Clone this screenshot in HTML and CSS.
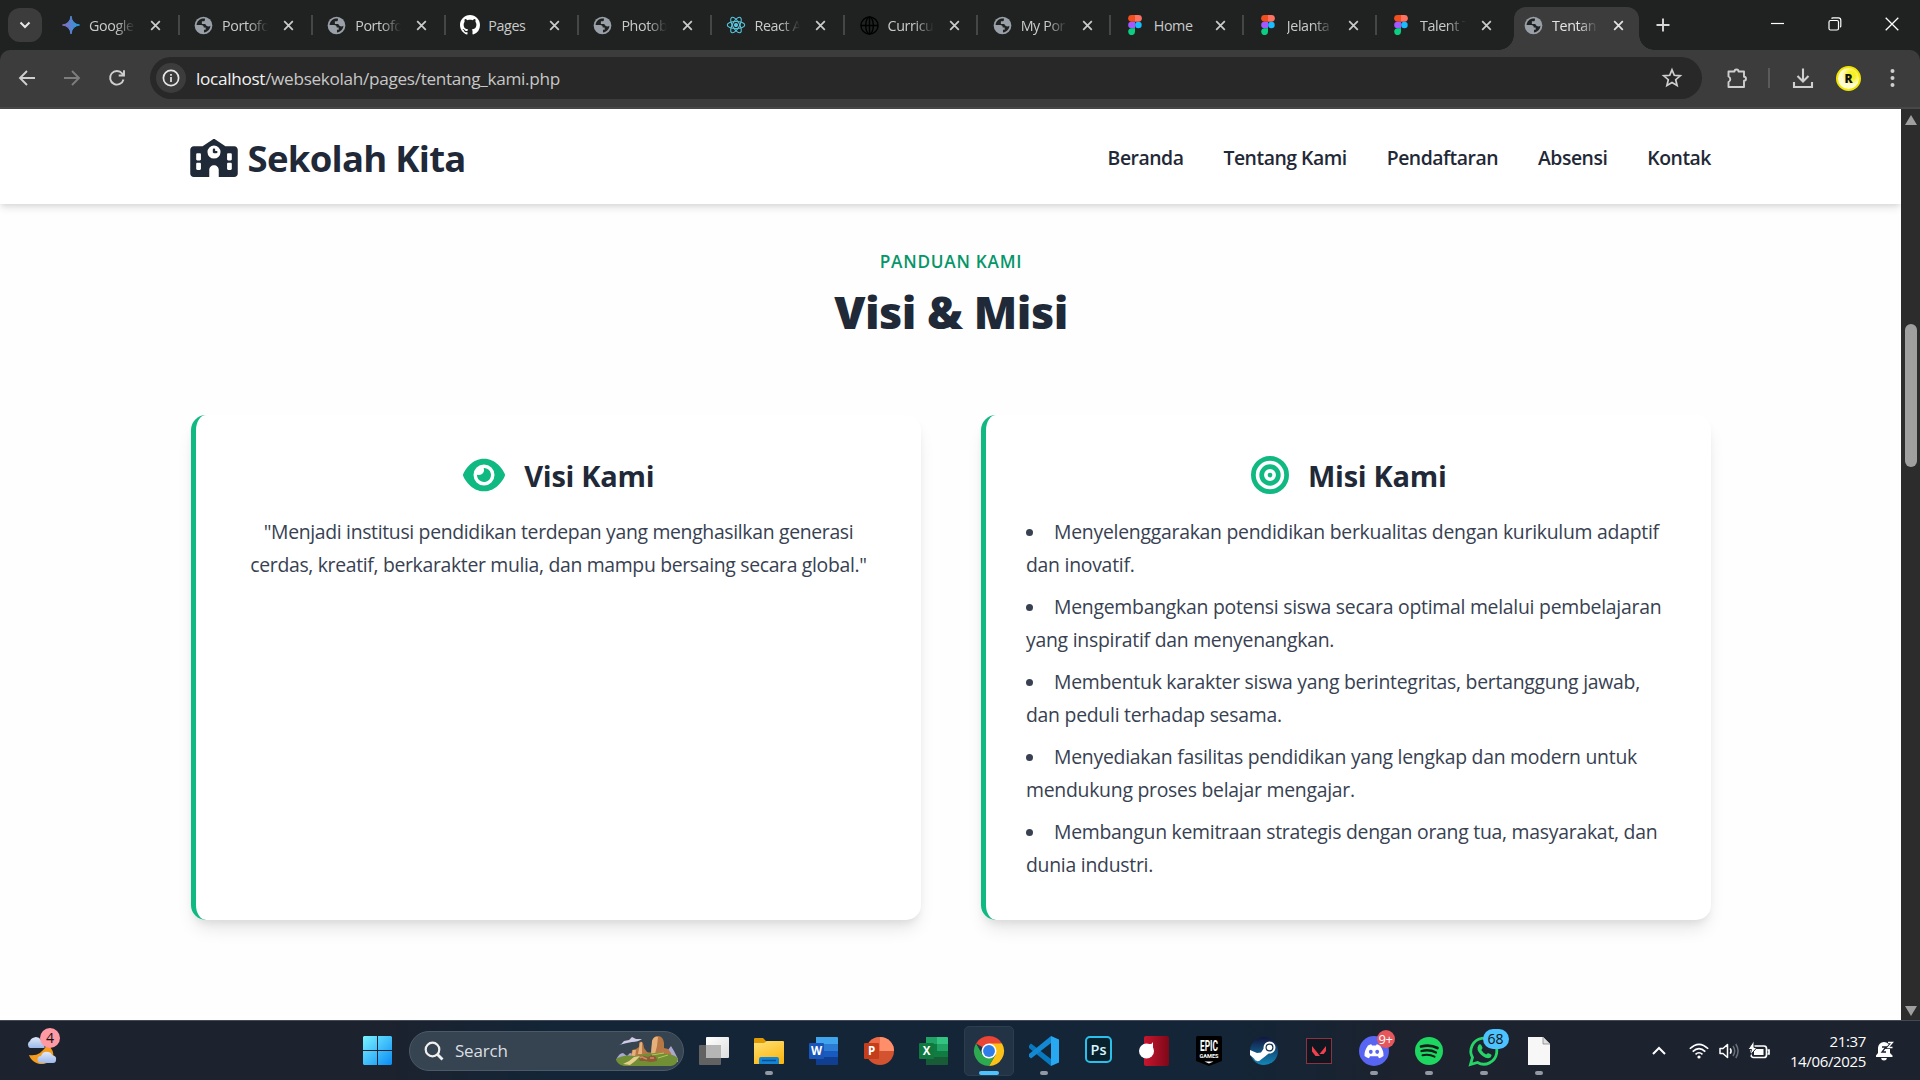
FILE: index.html
```html
<!DOCTYPE html>
<html lang="id">
<head>
<meta charset="utf-8">
<title>Tentang Kami - Sekolah Kita</title>
<link rel="stylesheet" href="styles.css">
</head>
<body>
<svg class="defs" aria-hidden="true">
  <symbol id="x" viewBox="0 0 12 12"><path d="M1.3 1.3l9.4 9.4M10.7 1.3l-9.4 9.4" stroke="currentColor" stroke-width="1.9" fill="none"/></symbol>
  <symbol id="globe" viewBox="0 0 20 20"><circle cx="10" cy="10" r="9.3" fill="#9aa0a8"/><path d="M9.2 2.6C5.600 3 3 6 2.700 9.500H7.500C9.500 9.500 10.300 10.500 10.300 12H12.300V14.500H10.500V17.300C14.200 17 17.200 14 17.300 10.300C16 11.300 14.500 11 13.500 10.500C12.500 10 12.500 8.300 11.300 8.300H8.300V5.600H10C11 5.600 11.500 5 11.500 4V2.700Z" fill="#1f2221"/></symbol>
  <symbol id="figma" viewBox="0 0 14 20"><path d="M3.500 0H7v6.700H3.500a3.350 3.350 0 0 1 0-6.700" fill="#f24e1e"/><path d="M7 0h3.500a3.350 3.350 0 0 1 0 6.700H7" fill="#ff7262"/><path d="M3.500 6.700H7v6.600H3.500a3.300 3.300 0 0 1 0-6.600" fill="#a259ff"/><circle cx="10.400" cy="10" r="3.300" fill="#1abcfe"/><path d="M3.500 13.300H7v3.300a3.400 3.400 0 1 1-3.500-3.300" fill="#0acf83"/></symbol>
</svg>

<div class="tabstrip">
  <div class="tab-search"><svg width="12" height="8" viewBox="0 0 12 8"><path d="M1.500 1.500L6 6l4.500-4.500" stroke="#e8e8e8" stroke-width="2" fill="none"/></svg></div>
  <div class="tabs">
    <div class="tab"><span class="fav"><svg width="18" height="20" viewBox="0 0 18 20"><defs><linearGradient id="gem"><stop offset="0" stop-color="#9168c0"/><stop offset=".5" stop-color="#5684d1"/><stop offset="1" stop-color="#1ba1e3"/></linearGradient></defs><path d="M9 1Q10 9 17.500 10Q10 11 9 19Q8 11 .5 10Q8 9 9 1" stroke="url(#gem)" stroke-width="1" fill="url(#gem)"/></svg></span><span class="label">Google</span><svg class="close"><use href="#x"/></svg></div>
    <div class="tab"><span class="fav"><svg width="19" height="19"><use href="#globe"/></svg></span><span class="label">Portofo</span><svg class="close"><use href="#x"/></svg></div>
    <div class="tab"><span class="fav"><svg width="19" height="19"><use href="#globe"/></svg></span><span class="label">Portofo</span><svg class="close"><use href="#x"/></svg></div>
    <div class="tab"><span class="fav"><svg width="20" height="20" viewBox="0 0 16 16"><path fill="#fff" d="M8 0C3.580 0 0 3.580 0 8c0 3.540 2.290 6.530 5.470 7.590.4.070.55-.17.55-.38 0-.19-.01-.82-.01-1.490-2.010.37-2.530-.49-2.690-.94-.09-.23-.48-.94-.82-1.130-.28-.15-.68-.52-.01-.53.63-.01 1.080.58 1.230.82.72 1.210 1.870.87 2.330.66.07-.52.28-.87.51-1.070-1.780-.2-3.640-.89-3.640-3.950 0-.87.31-1.590.82-2.150-.08-.2-.36-1.020.08-2.120 0 0 .67-.21 2.200.82.64-.18 1.320-.27 2-.27s1.360.09 2 .27c1.530-1.040 2.200-.82 2.200-.82.44 1.100.16 1.920.08 2.120.51.56.82 1.270.82 2.150 0 3.070-1.870 3.750-3.650 3.950.29.25.54.73.54 1.480 0 1.070-.01 1.930-.01 2.200 0 .21.15.46.55.38A8 8 0 0 0 16 8c0-4.420-3.580-8-8-8"/></svg></span><span class="label whole">Pages</span><svg class="close"><use href="#x"/></svg></div>
    <div class="tab"><span class="fav"><svg width="19" height="19"><use href="#globe"/></svg></span><span class="label">Photob</span><svg class="close"><use href="#x"/></svg></div>
    <div class="tab"><span class="fav"><svg width="20" height="20" viewBox="-12 -12 24 24" fill="none" stroke="#58c4dc" stroke-width="1.300"><circle r="1.800" fill="#58c4dc"/><ellipse rx="10.500" ry="4.200"/><ellipse rx="10.500" ry="4.200" transform="rotate(60)"/><ellipse rx="10.500" ry="4.200" transform="rotate(120)"/></svg></span><span class="label">React A</span><svg class="close"><use href="#x"/></svg></div>
    <div class="tab"><span class="fav"><svg width="19" height="19" viewBox="-10 -10 20 20" fill="none" stroke="#000" stroke-width="1.500"><circle r="9"/><ellipse rx="4" ry="9"/><path d="M-9 0H9M0-9V9"/></svg></span><span class="label">Curricu</span><svg class="close"><use href="#x"/></svg></div>
    <div class="tab"><span class="fav"><svg width="19" height="19"><use href="#globe"/></svg></span><span class="label">My Por</span><svg class="close"><use href="#x"/></svg></div>
    <div class="tab"><span class="fav"><svg width="14" height="20"><use href="#figma"/></svg></span><span class="label whole">Home</span><svg class="close"><use href="#x"/></svg></div>
    <div class="tab"><span class="fav"><svg width="14" height="20"><use href="#figma"/></svg></span><span class="label">Jelanta</span><svg class="close"><use href="#x"/></svg></div>
    <div class="tab last"><span class="fav"><svg width="14" height="20"><use href="#figma"/></svg></span><span class="label">Talent T</span><svg class="close"><use href="#x"/></svg></div>
    <div class="tab active"><span class="fav"><svg width="19" height="19"><use href="#globe"/></svg></span><span class="label">Tentan</span><svg class="close"><use href="#x"/></svg></div>
  </div>
  <svg class="newtab" width="14" height="14" viewBox="0 0 14 14"><path d="M7 .5v13M.5 7h13" stroke="#d8d8d8" stroke-width="1.900"/></svg>
  <div class="winbtns">
    <svg width="14" height="14"><path d="M0 6.500h13" stroke="#fff" stroke-width="1.200"/></svg>
    <svg width="14" height="14" fill="none" stroke="#fff" stroke-width="1.200"><rect x="1" y="3.500" width="9.500" height="9.500" rx="1.500"/><path d="M3.500 1.500q.5-.6 1.500-.6h5.500q2.300 0 2.300 2.300v5.500q0 1-.6 1.500"/></svg>
    <svg width="14" height="14"><path d="M.7.700l12.600 12.600M13.300.7L.7 13.300" stroke="#fff" stroke-width="1.300"/></svg>
  </div>
</div>

<div class="toolbar">
  <div class="navbtns">
    <svg width="18" height="18" viewBox="0 0 18 18" fill="none" stroke="#cfcfcf" stroke-width="1.900"><path d="M17 9H2.500M9 2L2 9l7 7"/></svg>
    <svg width="18" height="18" viewBox="0 0 18 18" fill="none" stroke="#7d7d7d" stroke-width="1.900"><path d="M1 9h14.500M9 2l7 7-7 7"/></svg>
    <svg width="18" height="18" viewBox="0 0 18 18" fill="none" stroke="#cfcfcf" stroke-width="1.900"><path d="M15.500 10.500A6.800 6.800 0 1 1 14.200 4.500L16 6.400M16 1.200V6.500H10.700"/></svg>
  </div>
  <div class="omnibox">
    <span class="info"><svg width="18" height="18" viewBox="0 0 18 18"><circle cx="9" cy="9" r="7.600" fill="none" stroke="#e6e6e6" stroke-width="1.700"/><path d="M9 8v5M9 5v1.700" stroke="#e6e6e6" stroke-width="1.700"/></svg></span>
    <span class="url"><b>localhost</b>/websekolah/pages/tentang_kami.php</span>
    <svg width="20" height="20" viewBox="0 0 20 20"><path d="M10 1.800l2.300 5.500 6 .5-4.600 3.900 1.400 5.800-5.100-3.100-5.100 3.100 1.400-5.800L1.700 7.800l6-.5z" fill="none" stroke="#cfcfcf" stroke-width="1.700"/></svg>
  </div>
  <div class="actions">
    <svg width="22" height="22" viewBox="0 0 22 22" fill="none" stroke="#cfcfcf" stroke-width="1.900"><path d="M2.500 4.500H8.500a2 2 0 0 1 4 0h5.500V9.800a2 2 0 0 1 0 4V20H2.500V15a3 3 0 0 0 0-5.500Z" stroke-linejoin="round"/></svg>
    <i class="vline"></i>
    <svg width="22" height="22" viewBox="0 0 22 22" fill="none" stroke="#cfcfcf" stroke-width="2.100"><path d="M11 1.500V14M5.500 9l5.500 5.500L16.500 9M2 15v5h18v-5"/></svg>
    <span class="avatar">R</span>
    <svg class="dots" width="5" height="20" fill="#cfcfcf"><circle cx="2.500" cy="3" r="2"/><circle cx="2.500" cy="10" r="2"/><circle cx="2.500" cy="17" r="2"/></svg>
  </div>
</div>

<div class="viewport">
  <div class="page">
    <header class="site-header">
      <div class="brand">
        <svg width="48" height="38" viewBox="0 0 640 512"><path fill="#1f2937" d="M337.800 5.400c-10.800-7.200-24.800-7.200-35.600 0L166.300 96H48C21.500 96 0 117.500 0 144V464c0 26.500 21.500 48 48 48H256V416c0-35.300 28.700-64 64-64s64 28.700 64 64v96H592c26.500 0 48-21.500 48-48V144c0-26.500-21.500-48-48-48H473.700ZM96 192h32c8.800 0 16 7.200 16 16v64c0 8.800-7.200 16-16 16H96c-8.800 0-16-7.200-16-16V208c0-8.800 7.200-16 16-16Zm400 16c0-8.800 7.200-16 16-16h32c8.800 0 16 7.200 16 16v64c0 8.800-7.200 16-16 16H512c-8.800 0-16-7.200-16-16ZM96 320h32c8.800 0 16 7.200 16 16v64c0 8.800-7.200 16-16 16H96c-8.800 0-16-7.200-16-16V336c0-8.800 7.200-16 16-16Zm400 16c0-8.800 7.200-16 16-16h32c8.800 0 16 7.200 16 16v64c0 8.800-7.200 16-16 16H512c-8.800 0-16-7.200-16-16ZM232 176a88 88 0 1 1 176 0 88 88 0 1 1-176 0Zm88-48c-8.800 0-16 7.200-16 16v32c0 8.800 7.200 16 16 16h32c8.800 0 16-7.200 16-16s-7.200-16-16-16H336V144c0-8.800-7.200-16-16-16Z" fill-rule="evenodd"/></svg>
        <span>Sekolah Kita</span>
      </div>
      <nav class="menu"><a>Beranda</a><a>Tentang Kami</a><a>Pendaftaran</a><a>Absensi</a><a>Kontak</a></nav>
    </header>
    <main class="content">
      <div class="eyebrow">PANDUAN KAMI</div>
      <h2 class="heading">Visi &amp; Misi</h2>
      <div class="cards">
        <section class="card">
          <h3><svg width="42" height="38" viewBox="0 0 576 512"><path fill="#10b981" d="M288 32c-80.800 0-145.500 36.800-192.600 80.600C48.600 156 17.300 208 2.500 243.700c-3.300 7.900-3.300 16.700 0 24.600C17.300 304 48.600 356 95.400 399.400C142.500 443.200 207.200 480 288 480s145.500-36.800 192.600-80.600c46.800-43.500 78.100-95.400 93-131.100c3.300-7.900 3.300-16.700 0-24.600c-14.900-35.700-46.200-87.700-93-131.100C433.500 68.800 368.800 32 288 32zM144 256a144 144 0 1 1 288 0 144 144 0 1 1-288 0zm144-64c0 35.300-28.700 64-64 64c-7.100 0-13.900-1.200-20.300-3.300c-5.500-1.800-11.900 1.600-11.700 7.400c.3 6.900 1.300 13.800 3.200 20.700c13.700 51.200 66.400 81.600 117.600 67.900s81.600-66.400 67.900-117.600c-11.100-41.500-47.800-69.400-88.600-71.100c-5.800-.2-9.200 6.100-7.400 11.700c2.100 6.400 3.300 13.200 3.300 20.300z"/></svg><span>Visi Kami</span></h3>
          <p>"Menjadi institusi pendidikan terdepan yang menghasilkan generasi<br>cerdas, kreatif, berkarakter mulia, dan mampu bersaing secara global."</p>
        </section>
        <section class="card">
          <h3><svg width="38" height="38" viewBox="0 0 512 512" fill="none" stroke="#10b981"><circle cx="256" cy="256" r="224" stroke-width="64"/><circle cx="256" cy="256" r="112" stroke-width="64"/><circle cx="256" cy="256" r="32" fill="#10b981" stroke="none"/></svg><span>Misi Kami</span></h3>
          <ul>
            <li>Menyelenggarakan pendidikan berkualitas dengan kurikulum adaptif<br>dan inovatif.</li>
            <li>Mengembangkan potensi siswa secara optimal melalui pembelajaran<br>yang inspiratif dan menyenangkan.</li>
            <li>Membentuk karakter siswa yang berintegritas, bertanggung jawab,<br>dan peduli terhadap sesama.</li>
            <li>Menyediakan fasilitas pendidikan yang lengkap dan modern untuk<br>mendukung proses belajar mengajar.</li>
            <li>Membangun kemitraan strategis dengan orang tua, masyarakat, dan<br>dunia industri.</li>
          </ul>
        </section>
      </div>
    </main>
  </div>
  <div class="scrollbar">
    <svg width="12" height="10"><path d="M6 0L12 10H0z" fill="#9f9f9f"/></svg>
    <div class="track"><div class="thumb"></div></div>
    <svg width="12" height="10"><path d="M6 10L12 0H0z" fill="#9f9f9f"/></svg>
  </div>
</div>

<div class="taskbar">
  <div class="weather">
    <svg width="36" height="38" viewBox="0 0 36 38"><defs><linearGradient id="cl" x2="0" y2="1"><stop offset="0" stop-color="#dfe9fb"/><stop offset="1" stop-color="#9db8ea"/></linearGradient></defs><path d="M4 18a4 4 0 0 1 0-7 6 5.500 0 0 1 11-1q4 1 3.500 8z" fill="url(#cl)"/><path d="M3 25q11 2 18-10 8 5 6 13c-4 8-20 9-24-3" fill="#f59c1c"/><path d="M15 33a3.500 3.500 0 0 1 0-7q2-5 7-4 3 0 4 3 5 1 4 5 0 3-3 3z" fill="url(#cl)"/></svg>
    <span class="badge pink">4</span>
  </div>
  <svg class="start" width="29" height="29"><defs><linearGradient id="win" gradientUnits="userSpaceOnUse" x1="0" y1="0" x2="29" y2="29"><stop offset="0" stop-color="#7af3ff"/><stop offset="1" stop-color="#0a8cf5"/></linearGradient></defs><path d="M1 0H14V14H0V1zM15 0H28L29 1V14H15zM0 15H14V29H1L0 28zM15 15H29V28L28 29H15z" fill="url(#win)"/></svg>
  <div class="search">
    <svg width="20" height="20" viewBox="0 0 20 20" fill="none" stroke="#f0f0f0" stroke-width="2.200"><circle cx="8.500" cy="8.500" r="6.800"/><path d="M13.500 13.500l5 5" stroke-width="2.800"/></svg>
    <span>Search</span>
    <svg width="62" height="32" viewBox="0 0 62 32"><path d="M0 25q3-7 7-7l4 3 3-3 6 2 32-5 3-4 3 5 4 8v3z" fill="#aaa8cf"/><path d="M3 10q3-1 5-4l5-1 3-3 4 2 6 0q-4 3-10 3-6 1-13 3z" fill="#cfcbe6"/><path d="M15 22l1-7 4-1 3-2 0-4q2-3 4 0l1 5 3 4 4 1 1-9q0-8 6-8 5 0 6 7l0 5 4 1 3 4 1 5z" fill="#b87845"/><path d="M24 8q2-2 2 0l0 11h-4zM36 6q2-5 6-4l-1 9-2 8-4 0zM17 15l3 0-1 7h-4z" fill="#e6b07a"/><path d="M0 24q7-5 20-3 16-5 32-2 8 1 10 5-1 6-7 7H8q-6-1-8-6" fill="#718f34"/><path d="M7 29q6-2 11-7l6-1q-4 5-10 9z" fill="#e8cd90"/><path d="M23 24q2-4 5-3l4 1 4-2q5 1 5 6l-6 1-6-1-5 0z" fill="#8f5836"/><path d="M24 23q2-2 4 0l3 1M34 23l4 0" stroke="#c78e60" stroke-width="1.500" fill="none"/><path d="M36 20l12-2M42 23l10-3" stroke="#b6c857"/></svg>
  </div>
  <div class="apps">
    <div class="app"><svg width="30" height="28"><defs><linearGradient id="tv" x2="1" y2="1"><stop offset="0" stop-color="#fff"/><stop offset="1" stop-color="#ddd"/></linearGradient></defs><rect x="7" y="0" width="23" height="21" rx="1" fill="url(#tv)"/><rect x="0" y="8" width="22" height="20" rx="1" fill="#626262"/><rect x="7" y="8" width="15" height="13" fill="#b5b5b5"/></svg></div>
    <div class="app run"><svg width="30" height="27"><defs><linearGradient id="fo" x2="0.500" y2="1"><stop offset="0" stop-color="#ffe175"/><stop offset="1" stop-color="#fbb917"/></linearGradient></defs><path d="M0 2q0-1 1-1h8l3 3h4v6H0z" fill="#dd9a06"/><path d="M0 6h10l3-2h16q1 0 1 1v21q0 1-1 1H0z" fill="url(#fo)"/><path d="M5 27v-5q0-2 2-2h16q2 0 2 2v5z" fill="#1285d6"/><path d="M8 23.500h14" stroke="#0a4f92" stroke-width="1.500"/></svg></div>
    <div class="app"><svg width="30" height="28"><path d="M7 0h21q1 0 1 1v6H7z" fill="#41a5ee"/><path d="M7 7h22v7H7z" fill="#2b7cd3"/><path d="M7 14h22v6H7z" fill="#185abd"/><path d="M7 20h22v7q0 1-1 1H7z" fill="#103f91"/><rect y="6" width="15" height="16" rx="1" fill="#1a56ba"/><text x="7.500" y="18.300" class="office">W</text></svg></div>
    <div class="app"><svg width="30" height="28"><circle cx="16" cy="14" r="14" fill="#d35230"/><path d="M16 0a14 14 0 0 1 14 14H16z" fill="#ff8f6b"/><path d="M16 0v14H2A14 14 0 0 1 16 0" fill="#ed6c47"/><rect y="6" width="15" height="16" rx="1" fill="#c43e1c"/><text x="7.500" y="18.300" class="office">P</text></svg></div>
    <div class="app"><svg width="30" height="28"><path d="M7 0h11v7H7z" fill="#21a366"/><path d="M18 0h10q1 0 1 1v6H18z" fill="#33c481"/><path d="M7 7h11v7H7z" fill="#107c41"/><path d="M18 7h11v7H18z" fill="#21a366"/><path d="M7 14h22v6H7z" fill="#107c41"/><path d="M7 20h22v7q0 1-1 1H7z" fill="#185c37"/><rect y="6" width="15" height="16" rx="1" fill="#10793f"/><text x="7.500" y="18.300" class="office">X</text></svg></div>
    <div class="app current"><svg width="30" height="30" viewBox="0 0 48 48"><path d="M24 24L3.200 12A24 24 0 0 1 44.800 12z" fill="#e94435"/><path d="M24 12h20.800A24 24 0 0 1 24 48L34.400 30z" fill="#fbc116"/><path d="M3.200 12A24 24 0 0 0 24 48l10.400-18H13.600z" fill="#2da94f"/><circle cx="24" cy="24" r="12" fill="#fff"/><circle cx="24" cy="24" r="9.500" fill="#2f7de9"/></svg></div>
    <div class="app run"><svg width="30" height="30" viewBox="0 0 30 30"><path d="M0 9.500l2-2L22 23v7L0 12z" fill="#0879bf"/><path d="M0 20.500l2 2L22 7V0L0 18z" fill="#1489d3"/><path d="M22 0l8 3.500v23L22 30z" fill="#28a8f0"/></svg></div>
    <div class="app"><svg class="up" width="27" height="27"><rect x="1" y="1" width="25" height="25" rx="4" fill="#07222c" stroke="#2bc0ec" stroke-width="2"/><text x="13.500" y="18.500" class="ps">Ps</text></svg></div>
    <div class="app"><svg width="30" height="30"><defs><linearGradient id="rd" x2="1" y2="0"><stop offset="0" stop-color="#c8162e"/><stop offset="1" stop-color="#7d0819"/></linearGradient></defs><rect x="5" width="25" height="30" rx="2" fill="url(#rd)"/><circle cx="7.500" cy="15" r="7.500" fill="#fff"/><path d="M8 8q5 1 6-2v8z" fill="#fff"/></svg></div>
    <div class="app"><svg width="26" height="30"><path d="M0 1.500Q0 0 1.500 0h23Q26 0 26 1.500V25l-13 5-13-5z" fill="#000"/><text x="13" y="15" class="epic" textLength="18" lengthAdjust="spacingAndGlyphs">EPIC</text><text x="13" y="22" class="games" textLength="19" lengthAdjust="spacingAndGlyphs">GAMES</text><path d="M8.500 25.500h9L13 27.500z" fill="#fff"/></svg></div>
    <div class="app"><svg width="28" height="28"><defs><linearGradient id="st" x2="0" y2="1"><stop offset="0" stop-color="#12163e"/><stop offset="1" stop-color="#1387b8"/></linearGradient></defs><circle cx="14" cy="14" r="14" fill="url(#st)"/><path d="M0 13l7 3 4-.500 4-6 6 5-6 5-4 3a4 4 0 0 1-7-1L0 18z" fill="#fff"/><circle cx="19.500" cy="10.500" r="5" fill="#14324f" stroke="#fff" stroke-width="2"/><circle cx="19.500" cy="10.500" r="2.800" fill="#fff"/></svg></div>
    <div class="app"><svg width="26" height="26"><rect x=".5" y=".5" width="25" height="25" fill="#10161f" stroke="#8d3240"/><path d="M6 8l8 10H9.500L6 13.500zM20 8v5l-2.300 3H13.500z" fill="#f0404e"/></svg></div>
    <div class="app run"><svg width="30" height="30"><circle cx="15" cy="15" r="15" fill="#5865f2"/><path d="M9 9.500Q12 8.200 12.300 8.300L13 9.500h4l.7-1.200Q18 8.200 21 9.500 25 15 24.500 20q-2.500 2-4.500 2.200L19 20.300H11l-1 1.900Q8 22 5.500 20 5 15 9 9.500" fill="#fff"/><ellipse cx="11.800" cy="15.800" rx="1.900" ry="2.100" fill="#5865f2"/><ellipse cx="18.200" cy="15.800" rx="1.900" ry="2.100" fill="#5865f2"/></svg><span class="badge red">9+</span></div>
    <div class="app run"><svg width="28" height="28" fill="none" stroke="#101d1a" stroke-linecap="round"><circle cx="14" cy="14" r="14" fill="#1ed760" stroke="none"/><path d="M6 9.500q9-2.500 16.500 1.500" stroke-width="2.700"/><path d="M6.500 14q8-2 14.500 1.500" stroke-width="2.300"/><path d="M7.500 18.300q6.500-1.500 12 1.400" stroke-width="2"/></svg></div>
    <div class="app run"><svg width="30" height="30" fill="none"><path d="M1.500 28.500L3.500 21.500A13 13 0 1 1 8.500 26.500z" stroke="#25d366" stroke-width="2.800"/><path d="M10 8.500q1.500-1 2.500 1l1 2.300q0 1-1.200 2.200 2 3.300 5 4.500 1.200-1.500 2.200-1.200l2.700 1.300q1 1-.7 2.900-3 2-8-1.500-5.500-4.500-5-8.500.500-2 1.500-3" fill="#25d366"/></svg><span class="badge blue">68</span></div>
    <div class="app run"><svg width="22" height="28"><path d="M0 0h15l7 7v21H0z" fill="#f7f7f7"/><path d="M15 0v7h7" fill="#ddd" stroke="#888" stroke-width=".8"/></svg></div>
  </div>
  <div class="tray">
    <svg class="chev" width="14" height="9"><path d="M1 8l6-6 6 6" fill="none" stroke="#fff" stroke-width="2"/></svg>
    <svg width="20" height="16" viewBox="0 0 20 16" fill="none" stroke="#fff" stroke-width="1.600"><path d="M.8 5.800q9.200-9 18.400 0M3.700 8.700q6.300-6 12.600 0M6.500 11.400q3.500-3.300 7 0"/><circle cx="10" cy="14" r="1.600" fill="#fff" stroke="none"/></svg>
    <svg width="20" height="16" viewBox="0 0 20 16" fill="none" stroke="#fff" stroke-width="1.500"><path d="M1 5.500h3L8.500 1.500v13L4 10.500H1z" stroke-linejoin="round"/><path d="M11.200 5.300q1.800 2.700 0 5.400"/><path d="M14 3q3.400 5 0 10M16.800 1q4.500 7 0 14" stroke="#68707c"/></svg>
    <svg width="21" height="17" viewBox="0 0 21 17" fill="none"><rect x="2" y="4" width="15.500" height="11.500" rx="2.500" stroke="#fff" stroke-width="1.700"/><path d="M18.500 8h1.500v4h-1.500" stroke="#fff" stroke-width="1.700"/><rect x="5" y="7" width="9.500" height="6" fill="#fff"/><path d="M5-1.500L-1 7.500H2.500L1 13.500 8 5.500H5z" fill="#fff" stroke="#1c222e" stroke-width="1"/></svg>
    <div class="clock"><span>21:37</span><span>14/06/2025</span></div>
    <svg width="18" height="20" viewBox="0 0 18 20"><path d="M0 16V14.500L2 12V7a6 6 0 0 1 12 0v5l2.500 2.500V16zM5 17h6q-.5 2.500-3 2.500T5 17" fill="#fff"/><path d="M6 6h4l-4 5h4" fill="none" stroke="#1c222e" stroke-width="1.300"/><path d="M12 1.500h4.500L12 6.500h4.500" fill="none" stroke="#1c222e" stroke-width="3"/><path d="M12 1.500h4.500L12 6.500h4.500" fill="none" stroke="#fff" stroke-width="1.300"/></svg>
  </div>
</div>
</body>
</html>
```
FILE: styles.css
```css
* { box-sizing: border-box; }
body {
  margin: 0;
  width: 1920px;
  height: 1080px;
  overflow: hidden;
  display: flex;
  flex-direction: column;
  font-family: "Open Sans", "Noto Sans", sans-serif;
  background: #1f2221;
}
svg { flex: none; display: block; overflow: visible; }
.defs { position: absolute; width: 0; height: 0; }

/* Tab strip */
.tabstrip { height: 50px; flex: none; display: flex; align-items: flex-start; background: #1f2221; }
.tab-search { width: 34px; height: 34px; margin: 8px 4.500px 0 8px; border-radius: 12px; background: #3c3c3c; display: flex; align-items: center; justify-content: center; }
.tabs { display: flex; }
.tab { flex: none; width: 133.100px; height: 50px; padding: 0 0 0 14px; display: flex; align-items: center; color: #c9cbca; }
.tab::after { content: ""; width: 2px; height: 20px; margin-left: auto; background: #444746; }
.tab.last::after { background: none; }
.tab.active::after { display: none; }
.fav { width: 20px; display: flex; justify-content: center; }
.label { width: 46px; margin: 1px 0 0 8.500px; font-size: 14.300px; letter-spacing: -.4px; line-height: 22px; white-space: nowrap; overflow: hidden; -webkit-mask-image: linear-gradient(90deg, #000 58%, transparent); mask-image: linear-gradient(90deg, #000 58%, transparent); }
.label.whole { -webkit-mask-image: none; mask-image: none; }
.close { width: 11px; height: 11px; margin-left: 15px; }
.tab.active { width: 125px; height: 43px; margin: 7px 0 0 3.500px; padding: 0 0 7px 9.500px; border-radius: 12px 12px 0 0; background: #3c3c3c; color: #e3e3e3; position: relative; }
.tab.active::before { content: ""; position: absolute; left: -15px; right: -15px; bottom: 0; height: 15px; background: radial-gradient(circle at 0 0, transparent 14.500px, #3c3c3c 15px) 0 0 / 15px 15px no-repeat, radial-gradient(circle at 100% 0, transparent 14.500px, #3c3c3c 15px) 100% 0 / 15px 15px no-repeat; }
.newtab { margin: 18px 0 0 17px; }
.winbtns { display: flex; gap: 43px; margin: 17px 21.500px 0 auto; }

/* Address bar */
.toolbar { height: 59px; flex: none; display: flex; align-items: center; padding-bottom: 1px; background: #3c3c3c; border-bottom: 2px solid #484848; border-radius: 10px 10px 0 0; }
.navbtns { display: flex; gap: 27px; margin: 0 24px 0 18px; }
.omnibox { width: 1552px; height: 42px; border-radius: 21px; background: #282828; display: flex; align-items: center; padding: 0 20px 0 6px; }
.info { width: 30px; height: 30px; border-radius: 50%; background: #3c3c3c; display: flex; align-items: center; justify-content: center; }
.url { flex: 1; margin: 1px 0 0 10px; font-size: 17.200px; letter-spacing: -.320px; color: #c7c7c7; }
.url b { font-weight: 400; color: #f2f2f2; }
.actions { display: flex; align-items: center; margin-left: 24px; }
.vline { width: 2px; height: 20px; background: #5a5a5a; margin: 0 22px 0 20px; }
.avatar { width: 25px; height: 25px; margin: 0 29px 0 22px; border-radius: 50%; border: 2px solid #f2e600; background: radial-gradient(circle at 65% 35%, #f7ef28 20%, #fffbd0 50%); font-size: 12px; font-weight: 800; line-height: 21px; text-align: center; color: #111; }

/* Web page */
.viewport { height: 911px; flex: none; display: flex; background: #fff; }
.page { width: 1901px; display: flex; flex-direction: column; background: #fefefe; }
.site-header { height: 95px; flex: none; padding: 0 190px; display: flex; align-items: center; justify-content: space-between; background: #fff; box-shadow: 0 5px 8px -1px rgba(0, 0, 0, .1), 0 2px 5px -1px rgba(0, 0, 0, .08); color: #1f2937; }
.brand { display: flex; align-items: center; gap: 9.500px; margin-top: 3px; font-size: 36.500px; font-weight: 700; letter-spacing: -.72px; line-height: 46px; }
.brand span { margin-top: -1px; }
.menu { display: flex; gap: 40px; margin-top: 1px; font-size: 19.400px; font-weight: 600; letter-spacing: -.480px; white-space: nowrap; }
.content { padding: 45px 190px 0 191px; }
.eyebrow { text-align: center; font-size: 17.200px; line-height: 25px; font-weight: 600; letter-spacing: .75px; color: #059669; }
.heading { margin: 13px 0 78px; text-align: center; font-size: 45px; line-height: 50px; font-weight: 800; letter-spacing: -.5px; color: #1f2937; }
.cards { display: grid; grid-template-columns: 1fr 1fr; gap: 60px; }
.card { height: 505px; padding: 37px 40px 0; border-left: 5px solid #10b981; border-radius: 15px; background: #fff; box-shadow: 0 12px 18px -4px rgba(0, 0, 0, .1), 0 5px 8px -3px rgba(0, 0, 0, .08); color: #374151; font-size: 19.400px; letter-spacing: -.260px; line-height: 32.800px; white-space: nowrap; }
.card h3 { margin: 0 0 18px; height: 46px; display: flex; align-items: center; justify-content: center; gap: 19.500px; font-size: 29px; line-height: 46px; font-weight: 700; letter-spacing: -.3px; color: #1f2937; }
.card h3 span { margin-top: 2px; }
.card p { margin: 0; text-align: center; letter-spacing: -.330px; }
.card ul { margin: 0; padding: 0; list-style: none; }
.card li { margin-bottom: 9.400px; }
.card li::before { content: ""; display: inline-block; width: 7px; height: 7px; margin-right: 21px; border-radius: 50%; background: #374151; vertical-align: 3px; }
.scrollbar { width: 19px; padding: 6px 0 4px; display: flex; flex-direction: column; align-items: center; background: #2c2c2c; }
.track { flex: 1; padding-top: 199px; }
.thumb { width: 12px; height: 143px; border-radius: 6px; background: #9f9f9f; }

/* Taskbar */
.taskbar { height: 60px; flex: none; display: flex; align-items: center; border-top: 1px solid #424b55; background: linear-gradient(90deg, #1c222e 20%, #132537 29%, #132537 64%, #1c222e 73%); color: #fff; }
.weather { width: 36px; margin: -4px 301px 0 26px; position: relative; }
.badge { position: absolute; height: 20px; border-radius: 10px; font-size: 14px; line-height: 20px; text-align: center; color: #111; }
.pink { width: 20px; left: 14px; top: -2px; background: #ff99a4; }
.search { width: 275px; height: 40px; margin: 0 2.500px 0 17px; padding: 0 5px 0 14px; display: flex; align-items: center; border: 1px solid #4c5966; border-radius: 20px; background: #364350; font-size: 17px; letter-spacing: -.2px; color: #dcdfe2; }
.search span { flex: 1; margin-left: 11px; }
.apps { display: flex; }
.app { width: 55px; height: 60px; display: flex; align-items: center; justify-content: center; position: relative; }
.app.run::after, .app.current::after { content: ""; position: absolute; left: 23.500px; bottom: 6px; width: 8px; height: 4px; border-radius: 2px; background: #9299a2; }
.app.current { width: 50px; height: 50px; margin: 5px 2.500px; border: 1px solid #2c3e4e; border-radius: 5px; background: #213344; }
.app.current::after { left: 14px; bottom: 0; width: 20px; background: #4cc2ff; }
.up { margin: -2px 2px 0 0; }
.office { font: 700 11.500px "Open Sans", sans-serif; fill: #fff; text-anchor: middle; }
.ps { font: 600 14.500px "Open Sans", sans-serif; fill: #d8f4ff; text-anchor: middle; }
.epic { font: 700 14px "Roboto", sans-serif; fill: #fff; text-anchor: middle; }
.games { font: 700 5.500px "Roboto", sans-serif; fill: #fff; text-anchor: middle; }
.red { left: 30px; top: 9px; width: 18px; height: 18px; line-height: 18px; font-size: 13px; letter-spacing: -.5px; background: #e5575c; color: #fff; }
.blue { left: 26px; top: 8px; width: 26px; background: #4cc2ff; }
.tray { margin-left: auto; padding-right: 26px; display: flex; align-items: center; gap: 10px; }
.chev { margin-right: 13px; }
.clock { width: 86px; display: flex; flex-direction: column; align-items: flex-end; font-size: 15px; line-height: 20px; letter-spacing: -.35px; }
```
